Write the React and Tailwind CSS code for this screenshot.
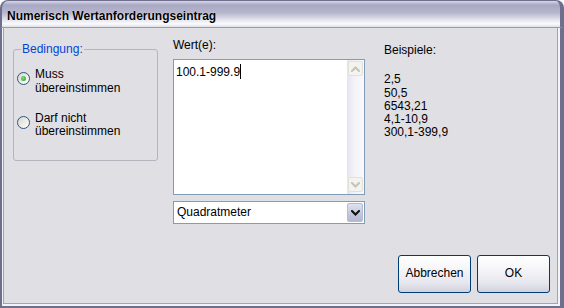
import React from "react";

function Chevron({ up = false, color = "#c4c4bc" }) {
  return (
    <svg width="9" height="6" viewBox="0 0 9 6">
      <polyline
        points={up ? "1,5 4.5,1.5 8,5" : "1,1 4.5,4.5 8,1"}
        fill="none"
        stroke={color}
        strokeWidth="2"
        strokeLinecap="square"
      />
    </svg>
  );
}

function Radio({ checked, lines }) {
  return (
    <div className="flex items-start gap-[5px]">
      <span className="mt-[4px] w-[13px] h-[13px] rounded-full border border-[#2c5487] bg-[linear-gradient(135deg,#d6d6d0,#ffffff)] flex items-center justify-center shrink-0">
        {checked && (
          <span className="w-[5px] h-[5px] rounded-full bg-[radial-gradient(circle_at_40%_40%,#7ee07e,#1e9a1e)]" />
        )}
      </span>
      <div>
        {lines.map((l) => (
          <div key={l}>{l}</div>
        ))}
      </div>
    </div>
  );
}

export default function App() {
  return (
    <div className="w-[564px] h-[308px] flex flex-col font-['Liberation_Sans',Arial,sans-serif] text-[12px] leading-[13.3px] text-black bg-white">
      <div className="h-[28px] shrink-0 rounded-t-[8px] border-t border-l-2 border-r-[4px] border-b border-[#6e6e8e] border-b-[#9a9ab4] bg-[linear-gradient(to_bottom,#d8d8e4_0%,#a8a8c4_15%,#b6b6cd_45%,#e8e8f0_75%,#fbfbfd_88%,#dedee6_100%)] pl-[5px] pt-[9px] font-bold [text-shadow:0_0_1px_#ffffff]">
        Numerisch Wertanforderungseintrag
      </div>
      <div className="flex-1 flex border-l-2 border-r-[4px] border-b-2 border-[#6e6e8e] bg-[#f3f3f5]">
        <div className="flex-1 flex items-start ml-[1px] mr-[2px] mb-[2px] border-l border-r border-b border-[#a3a3b5] bg-[#e0dfe3] pl-[9px] pt-[11px]">
          <fieldset className="w-[145px] mt-[4px] border border-[#b4b4be] rounded-[3px] pl-[3px] pt-[12px] pb-[22px]">
            <legend className="ml-[4px] px-[1px] text-[#0046d5]">Bedingung:</legend>
            <Radio checked lines={["Muss", "übereinstimmen"]} />
            <div className="mt-[17px]">
              <Radio lines={["Darf nicht", "übereinstimmen"]} />
            </div>
          </fieldset>

          <div className="ml-[15px] w-[192px] flex flex-col">
            <div>Wert(e):</div>
            <div className="mt-[7px] h-[136px] border border-[#7f9db9] bg-white flex">
              <div className="flex-1 pl-[2px] pt-[4px]">
                100.1-999.9
                <span className="inline-block w-[1px] h-[15px] bg-black align-[-3px]" />
              </div>
              <div className="w-[17px] flex flex-col justify-between pt-[1px] pb-[2px] items-center bg-[linear-gradient(to_right,#e4e4ef,#f2f2f8_40%,#fafafd)]">
                <div className="w-[15px] h-[15px] rounded-[2px] border border-[#e2e1da] bg-[#f4f3ee] flex items-center justify-center">
                  <Chevron up />
                </div>
                <div className="w-[15px] h-[15px] rounded-[2px] border border-[#e2e1da] bg-[#f4f3ee] flex items-center justify-center">
                  <Chevron />
                </div>
              </div>
            </div>
            <div className="mt-[6px] h-[23px] border border-[#7f9db9] bg-white flex">
              <div className="flex-1 pl-[3px] flex items-center">Quadratmeter</div>
              <div className="w-[16px] my-[1px] mr-[1px] rounded-[2px] border border-[#b6bad2] bg-[linear-gradient(to_bottom,#dfe2f2,#c2c6dc_60%,#b4b8d2)] flex items-center justify-center">
                <Chevron color="#101010" />
              </div>
            </div>
          </div>

          <div className="ml-[19px] flex-1 self-stretch flex flex-col pt-[5px]">
            <div>Beispiele:</div>
            <div className="mt-[16px]">
              <div>2,5</div>
              <div>50,5</div>
              <div>6543,21</div>
              <div>4,1-10,9</div>
              <div>300,1-399,9</div>
            </div>
            <div className="mt-auto flex justify-end gap-[6px] pr-[7px] pb-[10px]">
              <div className="w-[73px] h-[38px] rounded-[3px] border border-[#003c74] bg-[linear-gradient(to_bottom,#ffffff_0%,#f6f6f9_35%,#e6e6ee_75%,#d2d2de_100%)] flex items-center justify-center">
                Abbrechen
              </div>
              <div className="w-[73px] h-[38px] rounded-[3px] border border-[#003c74] bg-[linear-gradient(to_bottom,#ffffff_0%,#f6f6f9_35%,#e6e6ee_75%,#d2d2de_100%)] flex items-center justify-center">
                OK
              </div>
            </div>
          </div>
        </div>
      </div>
    </div>
  );
}
